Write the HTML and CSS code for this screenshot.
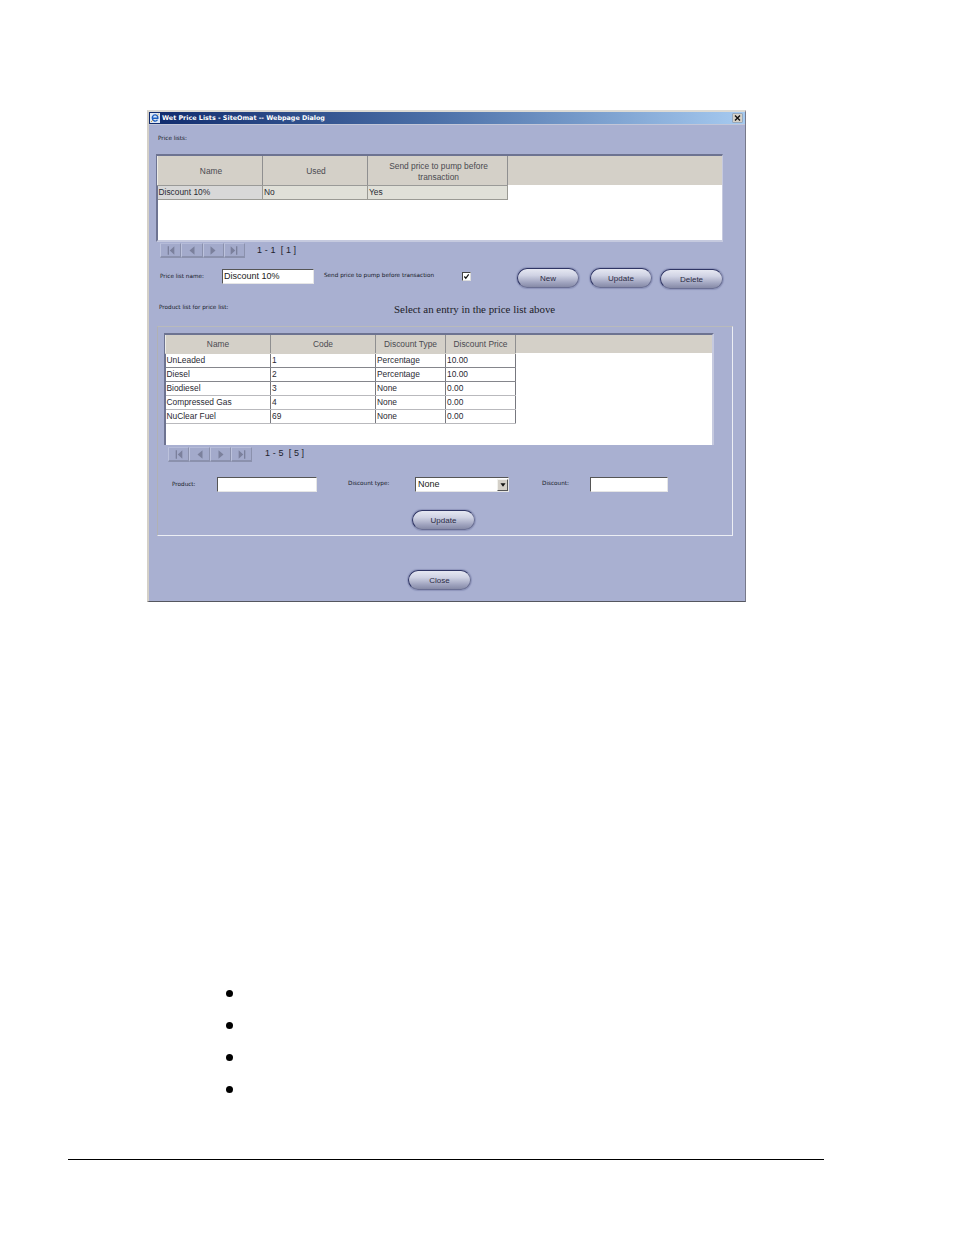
FILE: index.html
```html
<!DOCTYPE html>
<html lang="en">
<head>
<meta charset="utf-8">
<title>Wet Price Lists</title>
<link rel="stylesheet" href="styles.css">
</head>
<body>
<main class="page">
  <section class="dialog">
    <header class="titlebar">
      <svg class="ie-icon" viewBox="0 0 11 11"><rect width="11" height="11" fill="#dfe8f6"/><path d="M2.6 5.8h6V5A3 3 0 0 0 2.8 4M8.2 7.4A3 3 0 0 1 2.6 5.8 3 3 0 0 1 2.8 4" fill="none" stroke="#1c5fc0" stroke-width="1.5"/><path d="M1 10 3 8M9.6 1 7.8 2.8" stroke="#c99a30" stroke-width="1"/></svg>
      <span class="title-text">Wet Price Lists - SiteOmat -- Webpage Dialog</span>
      <span class="close-x"><svg viewBox="0 0 9 8"><path d="M2 1.5 7 6.5M7 1.5 2 6.5" stroke="#111" stroke-width="1.4"/></svg></span>
    </header>
    <div class="tiny label-lists">Price lists:</div>

    <div class="grid-box box-lists">
      <table class="grid grid-lists">
        <colgroup><col class="c105"><col class="c105"><col class="c140"></colgroup>
        <thead><tr><th>Name</th><th>Used</th><th>Send price to pump before<br>transaction</th></tr></thead>
        <tbody><tr class="selected"><td class="first">Discount 10%</td><td>No</td><td>Yes</td></tr></tbody>
      </table>
    </div>

    <div class="pager pager-lists">
      <div class="pager-btns">
        <span class="pbtn"><svg viewBox="0 0 12 10"><path d="M2 0h1.6v10H2zM10 0v10L4.5 5z"/></svg></span>
        <span class="pbtn"><svg viewBox="0 0 12 10"><path d="M9 0v10L3 5z"/></svg></span>
        <span class="pbtn"><svg viewBox="0 0 12 10"><path d="M3 0v10l6-5z"/></svg></span>
        <span class="pbtn"><svg viewBox="0 0 12 10"><path d="M2 0v10l5.5-5zM8.4 0H10v10H8.4z"/></svg></span>
      </div>
      <span class="pager-text">1 - 1&nbsp; [ 1 ]</span>
    </div>

    <div class="form-lists">
      <label class="tiny fl-name">Price list name:</label>
      <input class="field fl-input" type="text" value="Discount 10%">
      <label class="tiny fl-send">Send price to pump before transaction</label>
      <span class="check"><svg viewBox="0 0 8 8"><path d="M1.5 4 3.2 6 6.5 1.5" fill="none" stroke="#111" stroke-width="1.4"/></svg></span>
      <button class="pill btn-new">New</button>
      <button class="pill btn-update">Update</button>
      <button class="pill btn-delete">Delete</button>
    </div>

    <div class="product-head">
      <span class="tiny ph-label">Product list for price list:</span>
      <span class="ph-msg">Select an entry in the price list above</span>
    </div>

    <div class="group">
      <div class="grid-box box-products">
        <table class="grid grid-products">
          <colgroup><col class="c105"><col class="c105"><col class="c70"><col class="c70"></colgroup>
          <thead><tr><th>Name</th><th>Code</th><th>Discount Type</th><th>Discount Price</th></tr></thead>
          <tbody>
            <tr class="dark"><td>UnLeaded</td><td>1</td><td>Percentage</td><td>10.00</td></tr>
            <tr class="dark"><td>Diesel</td><td>2</td><td>Percentage</td><td>10.00</td></tr>
            <tr><td>Biodiesel</td><td>3</td><td>None</td><td>0.00</td></tr>
            <tr><td>Compressed Gas</td><td>4</td><td>None</td><td>0.00</td></tr>
            <tr><td>NuClear Fuel</td><td>69</td><td>None</td><td>0.00</td></tr>
          </tbody>
        </table>
      </div>

      <div class="pager pager-products">
        <div class="pager-btns">
          <span class="pbtn"><svg viewBox="0 0 12 10"><path d="M2 0h1.6v10H2zM10 0v10L4.5 5z"/></svg></span>
          <span class="pbtn"><svg viewBox="0 0 12 10"><path d="M9 0v10L3 5z"/></svg></span>
          <span class="pbtn"><svg viewBox="0 0 12 10"><path d="M3 0v10l6-5z"/></svg></span>
          <span class="pbtn"><svg viewBox="0 0 12 10"><path d="M2 0v10l5.5-5zM8.4 0H10v10H8.4z"/></svg></span>
        </div>
        <span class="pager-text">1 - 5&nbsp; [ 5 ]</span>
      </div>

      <div class="form-products">
        <label class="tiny fp-product">Product:</label>
        <input class="field fp-input1" type="text">
        <label class="tiny fp-type">Discount type:</label>
        <div class="field select"><span>None</span><span class="arrow"><svg viewBox="0 0 7 4"><path d="M.5 0h6L3.5 4z"/></svg></span></div>
        <label class="tiny fp-discount">Discount:</label>
        <input class="field fp-input2" type="text">
      </div>

      <button class="pill btn-update2">Update</button>
    </div>

    <button class="pill btn-close">Close</button>
  </section>

  <ul class="bullets">
    <li></li><li></li><li></li><li></li>
  </ul>
  <div class="rule"></div>
</main>
</body>
</html>
```

FILE: styles.css
```css
* { box-sizing: border-box; }
html, body { margin: 0; padding: 0; background: #fff; }
body { font-family: "Liberation Sans", Arial, sans-serif; color: #2a2a33; }
.page { padding-top: 110px; height: 1235px; overflow: hidden; }

.dialog {
  margin-left: 147px;
  width: 599px;
  height: 492px;
  background: #a9b0d1;
  border-top: 2px solid #dcdad4;
  border-left: 2px solid #d4d0c8;
  border-right: 1px solid #77798a;
  border-bottom: 1px solid #55565f;
}
.titlebar {
  display: flex;
  align-items: center;
  height: 12px;
  padding: 0 3px 0 1px;
  background: linear-gradient(90deg, #0f2a6c 0%, #4c70a8 48%, #a6caf0 100%);
  box-shadow: 0 1px 0 #c2c6d8;
}
.ie-icon { width: 10px; height: 10px; flex: none; }
.title-text {
  margin-left: 2px;
  font: bold 6.4px/12px "DejaVu Sans", sans-serif;
  color: #fff;
  white-space: nowrap;
}
.close-x {
  margin-left: auto;
  width: 9px;
  height: 8px;
  display: flex;
  background: #d4d0c8;
  box-shadow: 0 0 0 .5px #8a8a8a;
}
.close-x svg { width: 9px; height: 8px; }

.tiny {
  font: 5.7px/8px "DejaVu Sans", sans-serif;
  color: #141826;
  white-space: nowrap;
}
.label-lists { margin: 10px 0 0 9px; height: 8px; }

.grid-box {
  background: linear-gradient(#d4d0c8 var(--head), #fff var(--head));
  border-top: 2px solid #6d7391;
  border-left: 2px solid #6d7391;
  border-right: 1px solid #c6cadf;
  border-bottom: 2px solid #c6cadf;
}
.box-lists { --head: 29px; margin: 12px 0 0 7px; width: 567px; height: 88px; }
.box-products { --head: 18px; width: 550px; height: 112px; border-bottom: 0; border-right-width: 2px; }

.grid { border-collapse: collapse; table-layout: fixed; font-size: 8.4px; margin-left: -1px; }
.c105 { width: 105px; }
.c140 { width: 140px; }
.c70 { width: 70px; }
.grid-lists { width: 350px; }
.grid-products { width: 350px; }
.grid th {
  font-weight: normal;
  color: #4a4a50;
  padding: 0;
  text-align: center;
  border-right: 1px solid #8f8f90;
  border-left: 1px solid #ecebe6;
  line-height: 11px;
}
.grid-lists th { height: 29px; padding: 3px 0 0 2px; border-bottom: 1px solid #9a9a98; }
.grid-products th { height: 18px; padding-top: 1px; border-bottom: 1px solid #d4d0c8; }
.grid td {
  padding: 0 0 0 1px;
  height: 14px;
  line-height: 13px;
  overflow: hidden;
  white-space: nowrap;
  border-right: 1px solid #77787f;
  border-bottom: 1px solid #b9b9bd;
}
.grid tr.dark td { border-bottom-color: #85868c; }
.selected td { background: #e0e0d8; border-color: #9a9a94 !important; }
.selected td.first { background: #d8d8d8; }

.pager { display: flex; align-items: flex-start; height: 15px; }
.pager-lists { margin: 1px 0 0 11px; }
.pager-products { margin: 2px 0 0 4px; }
.pager-btns { display: flex; width: 85px; height: 15px; }
.pager-products .pager-btns { width: 84px; }
.pbtn {
  flex: 1;
  display: flex;
  align-items: center;
  justify-content: center;
  background: #a3aacb;
  border-top: 1px solid #b5bbd8;
  border-left: 1px solid #bcc2dc;
  border-right: 1px solid #8b91ad;
  border-bottom: 2px solid #8b91ad;
}
.pbtn svg { width: 10px; height: 9px; fill: #7b809c; }
.pager-text { margin-left: 12px; font-size: 9px; line-height: 14px; letter-spacing: .1px; color: #20202c; white-space: nowrap; }
.pager-products .pager-text { margin-left: 13px; line-height: 12px; }

.field {
  height: 15px;
  padding: 0 1px 1px;
  margin: 0;
  font: 9px/13px "Liberation Sans", sans-serif;
  color: #222;
  background: #fff;
  border-top: 1px solid #555;
  border-left: 1px solid #555;
  border-right: 1px solid #e6e6e6;
  border-bottom: 1px solid #e6e6e6;
  border-radius: 0;
  outline: none;
}

.pill {
  width: 63px;
  height: 20px;
  padding: 1px 0 0;
  font: 8px/18px "Liberation Sans", sans-serif;
  color: #2a2a44;
  border-radius: 10px;
  background: linear-gradient(#e6e8f2 0%, #d0d3e4 35%, #a0a4bf 75%, #868aa7 100%);
  border: 1px solid #2f3564;
  border-bottom-color: #6a6f93;
  border-right-color: #6a6f93;
  box-shadow: 0 0 1px 1px #8e95bb;
}

.form-lists { display: flex; align-items: flex-start; height: 21px; margin: 10px 0 0 11px; }
.fl-name { margin-top: 4px; width: 62px; }
.fl-input { margin-top: 1px; width: 92px; }
.fl-send { margin-top: 3px; margin-left: 10px; width: 138px; }
.check {
  margin-top: 4px;
  width: 9px;
  height: 9px;
  display: flex;
  background: #fff;
  border-top: 1px solid #444;
  border-left: 1px solid #444;
  border-right: 1px solid #ddd;
  border-bottom: 1px solid #ddd;
}
.check svg { width: 7px; height: 7px; }
.btn-new { margin-left: 46px; width: 62px; }
.btn-update { margin-left: 11px; width: 62px; }
.btn-delete { margin: 1px 0 0 8px; }

.product-head { display: flex; align-items: center; height: 14px; margin: 13px 0 0 10px; }
.ph-label { width: 235px; margin-top: -4px; }
.ph-msg { font: 10.9px/14px "Liberation Serif", serif; color: #1c1c28; white-space: nowrap; }

.group {
  margin: 10px 0 0 8px;
  width: 576px;
  height: 210px;
  padding: 6px;
  border-top: 1px solid #b9babb;
  border-left: 1px solid #b0b1b4;
  border-right: 1px solid #eceef4;
  border-bottom: 1px solid #eceef4;
}
.form-products { display: flex; align-items: flex-start; height: 15px; margin: 15px 0 0 8px; }
.fp-product { margin-top: 3px; width: 45px; }
.fp-input1 { width: 100px; }
.fp-type { margin: 2px 0 0 31px; width: 67px; }
.select { width: 94px; display: flex; align-items: center; justify-content: space-between; padding: 0 0 0 2px; }
.arrow {
  width: 11px;
  height: 12px;
  display: flex;
  align-items: center;
  justify-content: center;
  background: #d4d0c8;
  border-top: 1px solid #f2f2ee;
  border-left: 1px solid #f2f2ee;
  border-right: 1px solid #555;
  border-bottom: 1px solid #555;
}
.arrow svg { width: 6px; height: 4px; fill: #111; }
.fp-discount { margin: 2px 0 0 33px; width: 48px; }
.fp-input2 { width: 78px; }
.btn-update2 { display: block; margin: 18px 0 0 248px; }
.btn-close { display: block; margin: 34px 0 0 259px; }

.bullets {
  list-style: none;
  margin: 388px 0 0 226px;
  padding: 0;
  display: flex;
  flex-direction: column;
  gap: 25px;
}
.bullets li { width: 7px; height: 7px; border-radius: 50%; background: #000; }
.rule { margin: 66px 0 0 68px; width: 756px; height: 1px; background: #000; }
```
